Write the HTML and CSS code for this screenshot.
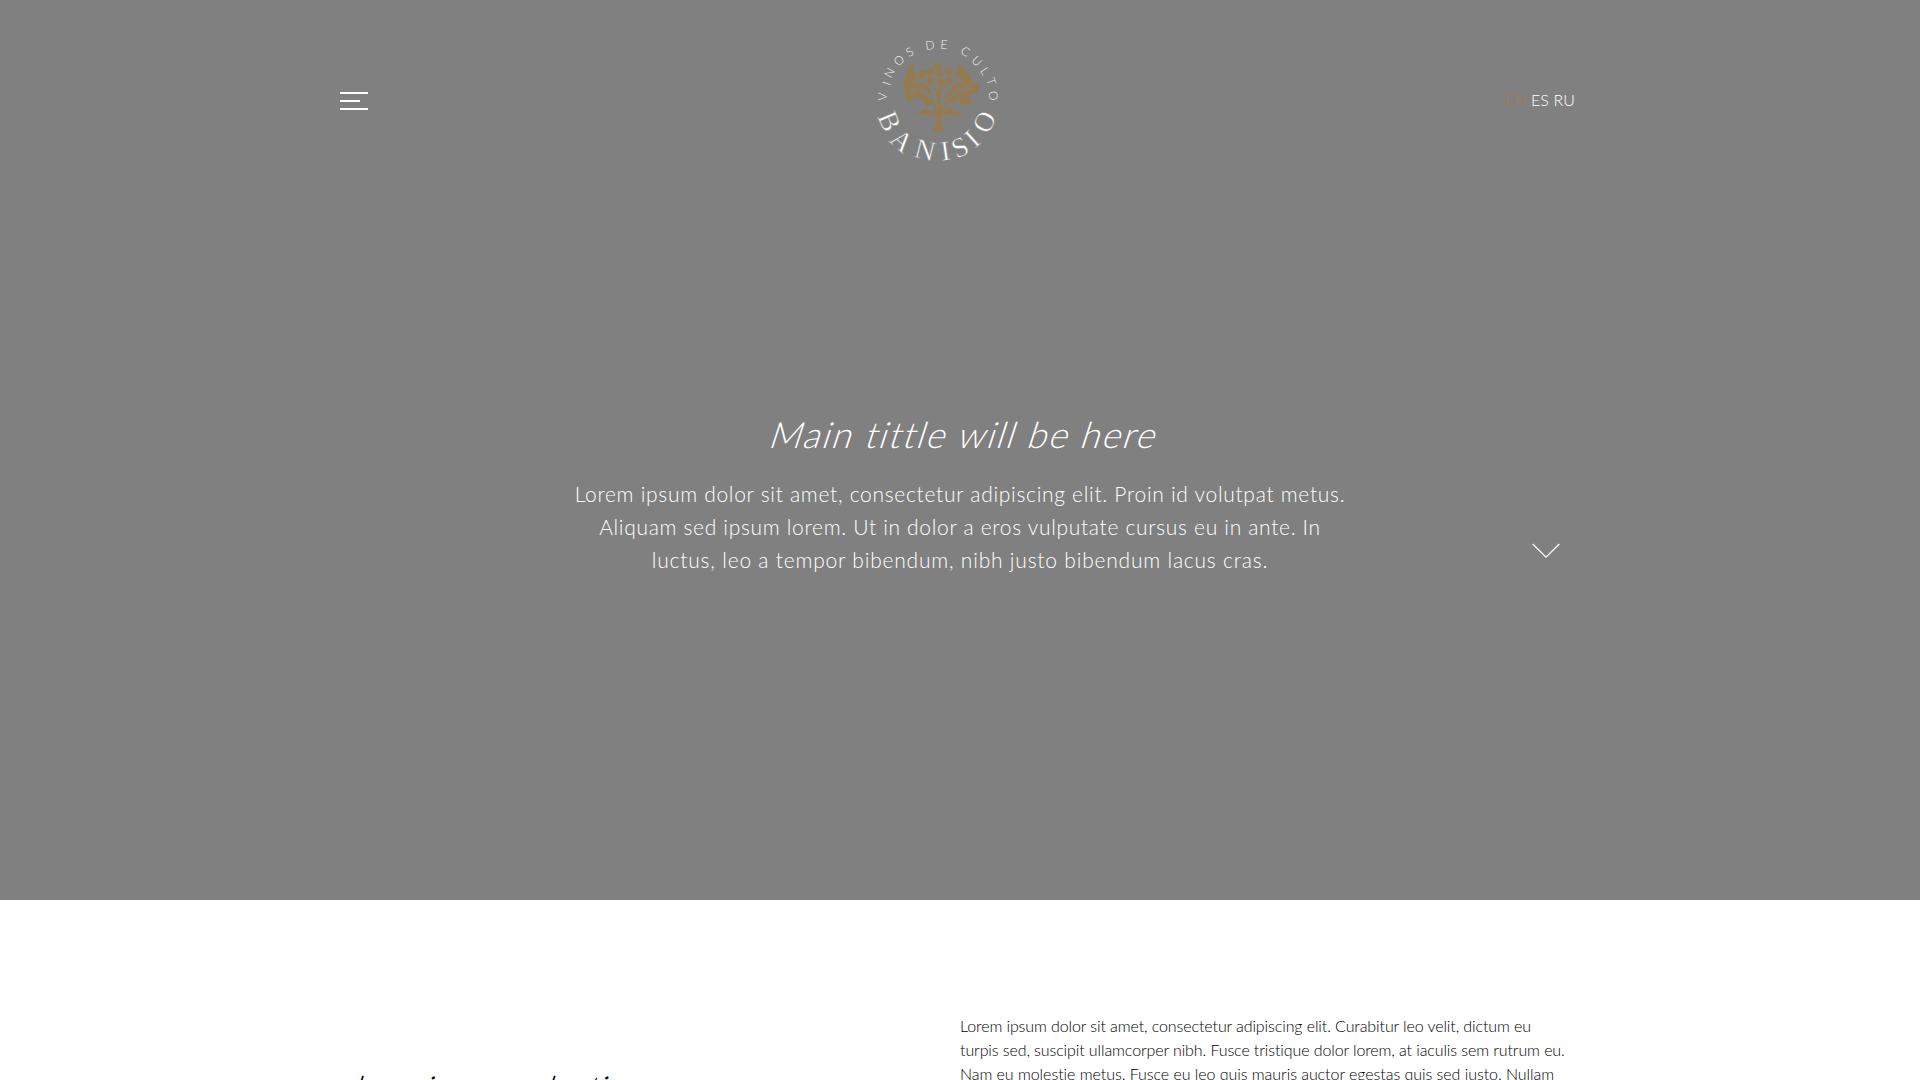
FILE: index.html
```html
<!DOCTYPE html>
<html lang="en">
<head>
<meta charset="utf-8">
<title>Banisio</title>
<link rel="stylesheet" href="styles.css">
</head>
<body>
<section class="hero">
  <header class="header">
    <button class="menu" aria-label="Menu"><span></span><span class="short"></span><span></span></button>
    <a class="logo" href="#">
      <svg viewBox="0 0 480 480" width="160" height="160">
        <defs>
          <path id="leaf" d="M0-14L4-8L10-10L10-3L14 2L8 5L6 11L1 8L-5 13L-7 6L-13 5L-10-1L-12-8L-4-8Z"/>
        </defs>
        <g class="small-ring" text-anchor="middle">
          <text transform="translate(67 230) rotate(-87)" dy=".36em">V</text>
          <text transform="translate(80 190) rotate(-72)" dy=".36em">I</text>
          <text transform="translate(88 158) rotate(-61)" dy=".36em">N</text>
          <text transform="translate(117 121) rotate(-44)" dy=".36em">O</text>
          <text transform="translate(149 96) rotate(-30)" dy=".36em">S</text>
          <text transform="translate(210 75) rotate(-8)" dy=".36em">D</text>
          <text transform="translate(252 73) rotate(6)" dy=".36em">E</text>
          <text transform="translate(316 94) rotate(29)" dy=".36em">C</text>
          <text transform="translate(351 123) rotate(45)" dy=".36em">U</text>
          <text transform="translate(375 153) rotate(58)" dy=".36em">L</text>
          <text transform="translate(394 184) rotate(71)" dy=".36em">T</text>
          <text transform="translate(400 227) rotate(86)" dy=".36em">O</text>
        </g>
        <g class="big-ring" text-anchor="middle">
          <text transform="translate(88 304) rotate(67)" dy=".33em">B</text>
          <text transform="translate(125 362) rotate(41)" dy=".33em">A</text>
          <text transform="translate(195 390) rotate(14)" dy=".33em">N</text>
          <text transform="translate(256 393) rotate(-8)" dy=".33em">I</text>
          <text transform="translate(300 382) rotate(-25)" dy=".33em">S</text>
          <text transform="translate(337 356) rotate(-42)" dy=".33em">I</text>
          <text transform="translate(373 306) rotate(-65)" dy=".33em">O</text>
        </g>
        <g class="tree">
          <path d="M228 280C226 266 216 254 211 238L216 236C222 252 232 262 235 272C238 256 228 240 231 222L218 200L223 198L236 216L243 190L248 191L241 224C238 240 244 252 244 266C248 254 256 244 272 232L276 236C258 252 250 264 246 280C248 294 240 302 245 314C247 324 254 330 260 336L246 330L241 333L235 340L231 331L222 330L210 336C221 328 229 318 231 304C226 294 231 290 228 280Z"/>
          <path d="M241 222C248 212 258 206 260 194L255 193C253 204 244 208 239 216Z"/>
          <path d="M154 282C168 279 178 281 183 275C188 267 200 266 207 273C216 270 224 276 228 281L230 286L196 284ZM247 284C246 276 254 270 260 265C270 262 278 268 280 274C288 271 294 276 298 280L314 286L280 285Z"/>
          <circle cx="152" cy="146" r="9"/>
          <path d="M143 156L160 155L167 163L174 170L190 164L193 169L176 179L166 175L162 187C184 183 202 194 211 209L215 230L206 218L190 208L176 210L156 202L134 198L131 190L137 171Z"/>
          <circle cx="303" cy="145" r="9"/>
          <path d="M296 152L316 152L327 164L334 184L348 194L358 194L358 200L342 204L322 199L312 204L296 207L280 222L262 234L246 240L250 235L268 218L277 200L292 190L307 186L304 172L296 166L284 172L281 168Z"/>
          <use href="#leaf" x="233" y="139"/><use href="#leaf" x="210" y="156"/><use href="#leaf" x="238" y="161"/>
          <use href="#leaf" x="266" y="155"/><use href="#leaf" x="211" y="181"/><use href="#leaf" x="242" y="185"/>
          <use href="#leaf" x="267" y="184"/><use href="#leaf" x="187" y="162"/><use href="#leaf" x="144" y="213"/>
          <use href="#leaf" x="147" y="234"/><use href="#leaf" x="169" y="222"/><use href="#leaf" x="190" y="230"/>
          <use href="#leaf" x="205" y="247"/><use href="#leaf" x="280" y="239"/><use href="#leaf" x="300" y="224"/>
          <use href="#leaf" x="308" y="243"/><use href="#leaf" x="322" y="219"/><use href="#leaf" x="321" y="244"/>
          <use href="#leaf" x="344" y="211"/>
        </g>
        <path class="veins" d="M147 168L153 182L142 192M160 194L186 200L203 213M160 188L150 196M300 158L312 168L318 186M274 224L294 202L318 196M264 230L282 210M320 194L340 200M233 134V148M210 150V164M238 156V170M266 150V163M211 176V190M242 180V194M267 178V191"/>
      </svg>
    </a>
    <nav class="langs"><a class="active" href="#">EN</a> <a href="#">ES</a> <a href="#">RU</a></nav>
  </header>
  <div class="intro">
    <h1><span>Main tittle will be here</span></h1>
    <p><span class="lead-1">Lorem ipsum dolor sit amet, consectetur adipiscing elit. Proin id volutpat metus.</span><br><span class="lead-2">Aliquam sed ipsum lorem. Ut in dolor a eros vulputate cursus eu in ante. In</span><br><span class="lead-3">luctus, leo a tempor bibendum, nibh justo bibendum lacus cras.</span></p>
  </div>
  <svg class="chevron" width="28" height="16" viewBox="0 0 28 16"><path d="M.7 1L14 14.2L27.3 1"/></svg>
</section>
<section class="about">
  <h2><span>domaine selection</span></h2>
  <p><span class="copy-1">Lorem ipsum dolor sit amet, consectetur adipiscing elit. Curabitur leo velit, dictum eu</span><br><span class="copy-2">turpis sed, suscipit ullamcorper nibh. Fusce tristique dolor lorem, at iaculis sem rutrum eu.</span><br><span class="copy-3">Nam eu molestie metus. Fusce eu leo quis mauris auctor egestas quis sed justo. Nullam</span></p>
</section>
</body>
</html>
```
FILE: styles.css
```css
* { box-sizing: border-box; }
html, body { margin: 0; height: 1080px; overflow: hidden; }
body { font-family: Lato, "Open Sans", sans-serif; font-weight: 300; background: #fff; }
h1, h2, p { margin: 0; font-weight: 300; }
a { color: inherit; text-decoration: none; }

.hero { position: relative; height: 900px; background: #808080; color: #fff; }
.header { display: grid; grid-template-columns: 1fr 160px 1fr; align-items: center; width: 1240px; margin: 0 auto; padding-top: 20px; }
.menu { display: flex; flex-direction: column; gap: 6px; width: 28px; padding: 0; margin-top: 1px; border: 0; background: none; }
.menu span { width: 28px; height: 2px; background: #fff; }
.menu .short { width: 20px; }
.logo { transform: translateX(-20px); }
.logo svg { display: block; }
.small-ring text { font: 300 36px Lato, sans-serif; fill: #f4f4f4; }
.big-ring text { font: 400 84px "Liberation Serif", serif; fill: #fff; stroke: #808080; stroke-width: 1.4; }
.tree { fill: #967a4b; }
.veins { fill: none; stroke: #808080; stroke-width: 1.6; }
.langs { justify-self: end; margin: -2px 5px 0 0; font-size: 16px; letter-spacing: .1px; color: #fff; }
.langs .active { color: #a37f42; }

.intro { padding-top: 229px; text-align: center; }
h1 span, h2 span { display: inline-block; transform: skewX(-18deg); white-space: nowrap; }
h1 { font-size: 36px; line-height: 50px; letter-spacing: 1.7px; padding-left: 11px; }
.intro p { margin-top: 18px; font-size: 21px; line-height: 33px; color: #fff; white-space: nowrap; }
.lead-1 { letter-spacing: .7px; }
.lead-2 { letter-spacing: .68px; }
.lead-3 { letter-spacing: .79px; }
.chevron { position: absolute; left: 1532px; top: 543px; fill: none; stroke: #fff; stroke-width: 1.2; }

.about { display: grid; grid-template-columns: 620px 620px; width: 1240px; margin: 0 auto; padding-top: 114px; color: #000; }
h2 { padding: 49px 0 0 3px; font-size: 36px; line-height: 50px; letter-spacing: -.8px; word-spacing: 35px; font-weight: 300; color: #000; }
.about p { font-size: 16px; line-height: 24px; white-space: nowrap; }
.copy-1 { letter-spacing: -.1px; }
.copy-2 { letter-spacing: -.1px; }
.copy-3 { letter-spacing: -.05px; }
```
